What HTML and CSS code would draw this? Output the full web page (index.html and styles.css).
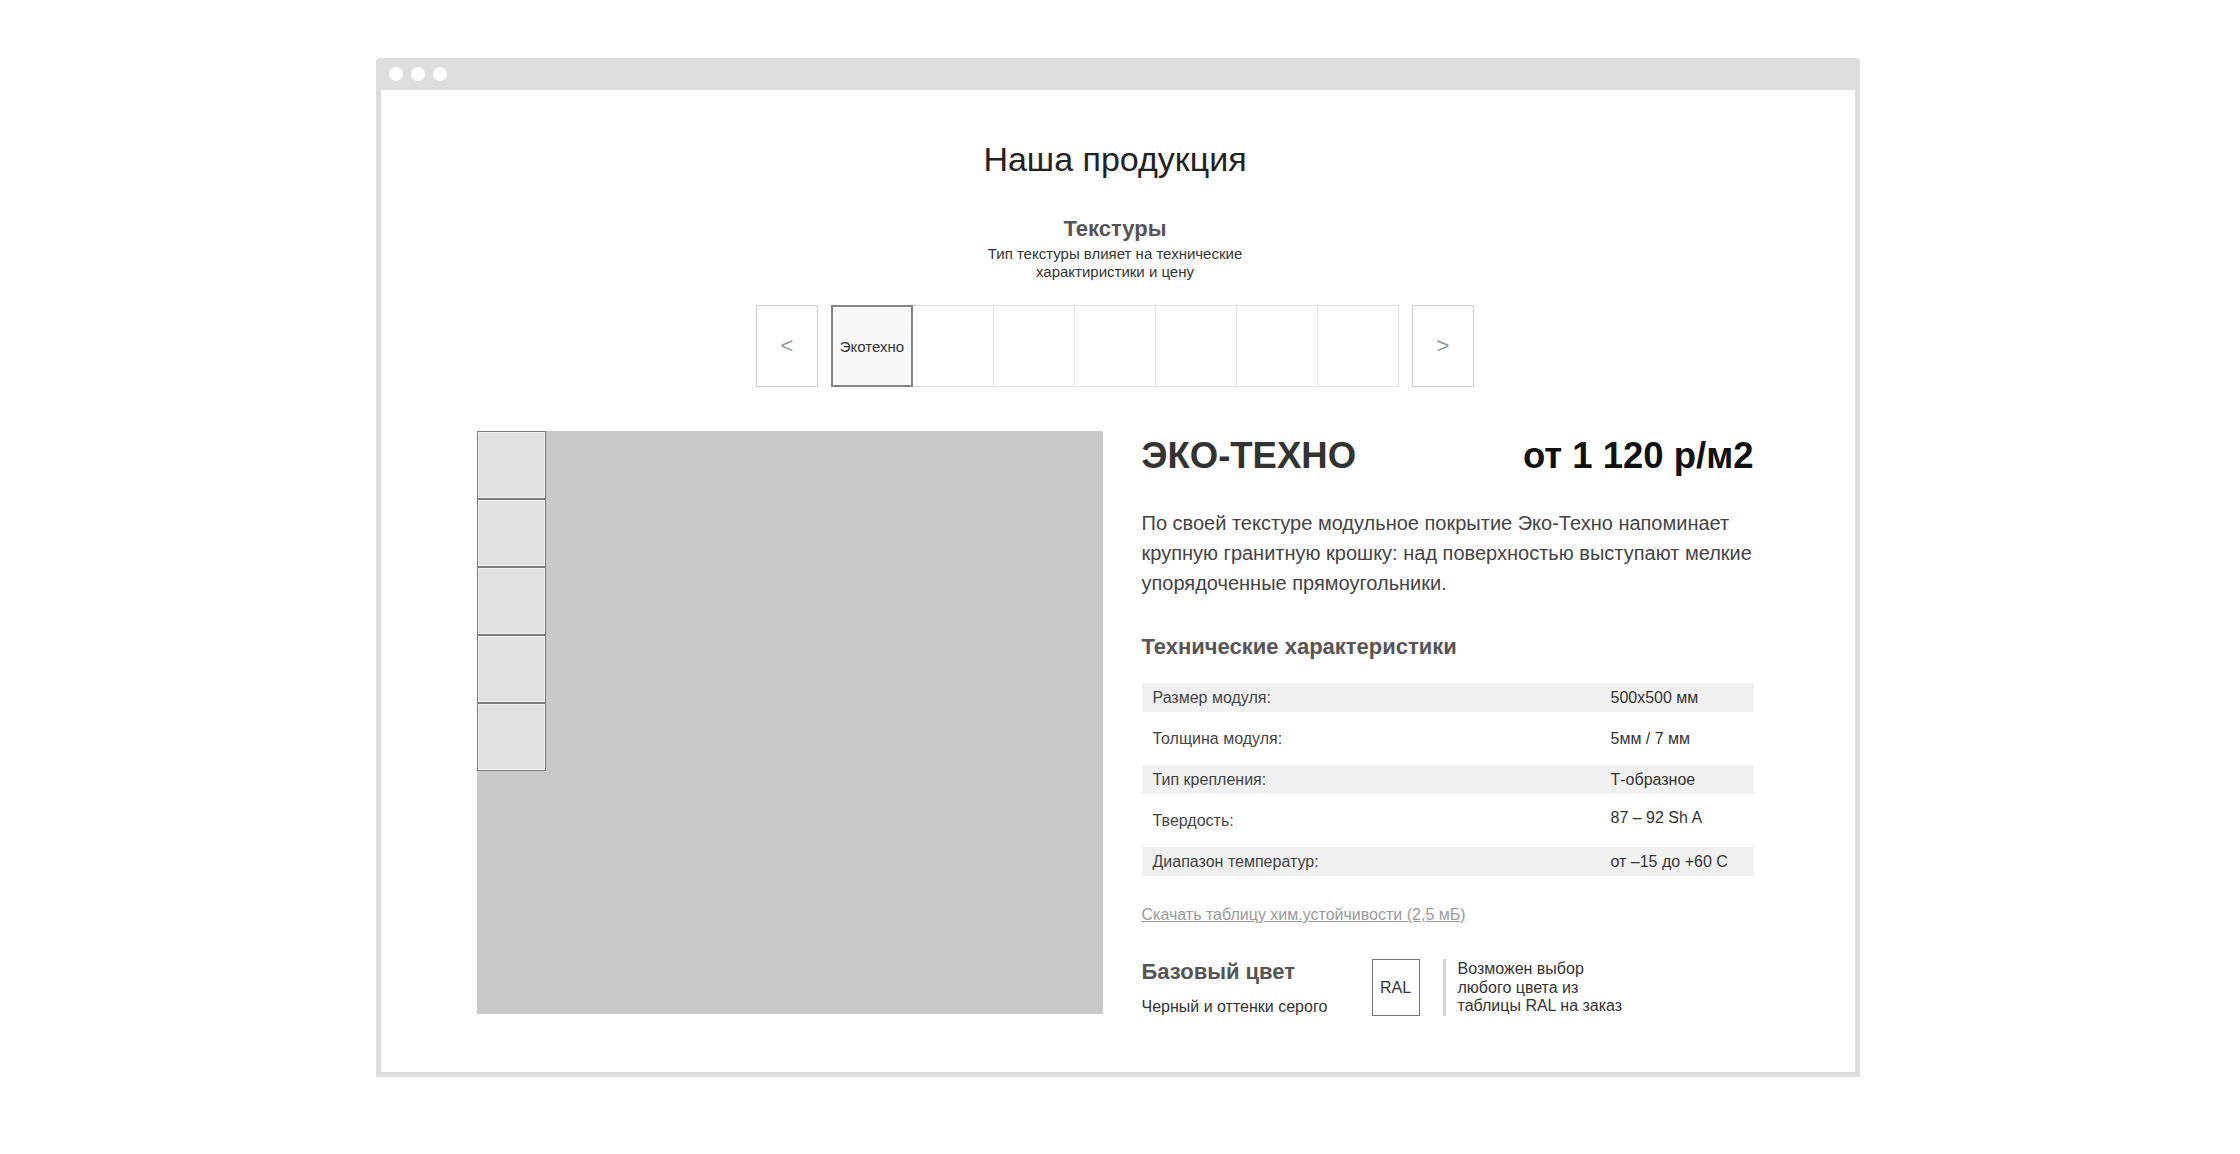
FILE: index.html
```html
<!DOCTYPE html>
<html lang="ru">
<head>
<meta charset="utf-8">
<title>Наша продукция</title>
<link rel="stylesheet" href="styles.css">
</head>
<body>
<div class="window">
  <div class="window-bar">
    <span class="dot"></span>
    <span class="dot"></span>
    <span class="dot"></span>
  </div>
  <div class="window-body">
    <h1 class="page-title">Наша продукция</h1>

    <section class="textures">
      <h2 class="textures-title">Текстуры</h2>
      <p class="textures-note">Тип текстуры влияет на технические<br>характиристики и цену</p>
      <div class="carousel">
        <button class="carousel-arrow" type="button">&lt;</button>
        <div class="carousel-track">
          <div class="texture-tile is-active">Экотехно</div>
          <div class="texture-tile"></div>
          <div class="texture-tile"></div>
          <div class="texture-tile"></div>
          <div class="texture-tile"></div>
          <div class="texture-tile"></div>
          <div class="texture-tile"></div>
        </div>
        <button class="carousel-arrow" type="button">&gt;</button>
      </div>
    </section>

    <section class="product">
      <div class="gallery">
        <div class="thumbs">
          <div class="thumb"></div>
          <div class="thumb"></div>
          <div class="thumb"></div>
          <div class="thumb"></div>
          <div class="thumb"></div>
        </div>
      </div>

      <div class="product-info">
        <div class="info-head">
          <h2 class="product-name">ЭКО-ТЕХНО</h2>
          <div class="price">от 1 120 р/м2</div>
        </div>
        <p class="description">По своей текстуре модульное покрытие Эко-Техно напоминает крупную гранитную крошку: над поверхностью выступают мелкие упорядоченные прямоугольники.</p>

        <h3 class="section-title">Технические характеристики</h3>
        <div class="specs">
          <div class="spec-row is-shaded"><span class="spec-label">Размер модуля:</span><span class="spec-value">500x500 мм</span></div>
          <div class="spec-row is-plain"><span class="spec-label">Толщина модуля:</span><span class="spec-value">5мм / 7 мм</span></div>
          <div class="spec-row is-shaded"><span class="spec-label">Тип крепления:</span><span class="spec-value">Т-образное</span></div>
          <div class="spec-row is-plain"><span class="spec-label">Твердость:</span><span class="spec-value is-raised">87 – 92 Sh A</span></div>
          <div class="spec-row is-shaded"><span class="spec-label">Диапазон температур:</span><span class="spec-value">от –15 до +60 С</span></div>
        </div>

        <a class="download-link" href="#">Скачать таблицу хим.устойчивости (2,5 мБ)</a>

        <div class="base-color">
          <div class="base-text">
            <h3 class="section-title">Базовый цвет</h3>
            <p class="base-sub">Черный и оттенки серого</p>
          </div>
          <div class="ral-box">RAL</div>
          <div class="ral-bar"></div>
          <p class="ral-note">Возможен выбор<br>любого цвета из<br>таблицы RAL на заказ</p>
        </div>
      </div>
    </section>
  </div>
</div>
</body>
</html>
```

FILE: styles.css
```css
* {
  box-sizing: border-box;
}

body {
  margin: 0;
  background: #ffffff;
  font-family: "Liberation Sans", Arial, sans-serif;
  color: #333333;
}

h1, h2, h3, p {
  margin: 0;
}

/* browser window frame */
.window {
  width: 1484px;
  margin: 58px 0 0 376px;
}

.window-bar {
  height: 32px;
  background: #dedede;
  border-radius: 4px 4px 0 0;
  display: flex;
  align-items: center;
  gap: 8px;
  padding-left: 13px;
}

.dot {
  width: 14px;
  height: 14px;
  border-radius: 50%;
  background: #ffffff;
}

.window-body {
  height: 987px;
  border: 5px solid #dedede;
  border-top: 0;
  padding: 49px 6px 0 0;
}

.page-title {
  font-size: 34px;
  line-height: 40px;
  font-weight: normal;
  text-align: center;
  color: #222222;
}

/* texture picker */
.textures {
  text-align: center;
}

.textures-title {
  margin-top: 38px;
  font-size: 22px;
  line-height: 24px;
  font-weight: bold;
  color: #555555;
}

.textures-note {
  margin-top: 4px;
  font-size: 15px;
  line-height: 18px;
  color: #333333;
}

.carousel {
  margin-top: 24px;
  display: flex;
  justify-content: center;
  gap: 13px;
  height: 82px;
}

.carousel-arrow {
  width: 62px;
  height: 82px;
  padding: 0;
  border: 1px solid #cfcfcf;
  background: #ffffff;
  color: #999999;
  font-family: "Liberation Sans", Arial, sans-serif;
  font-size: 22px;
}

.carousel-track {
  display: flex;
}

.texture-tile {
  width: 82px;
  height: 82px;
  border: 1px solid #e2e2e2;
  background: #ffffff;
  display: flex;
  align-items: center;
  justify-content: center;
  font-size: 15px;
  color: #333333;
}

.texture-tile + .texture-tile {
  margin-left: -1px;
}

.texture-tile.is-active {
  position: relative;
  z-index: 1;
  border: 2px solid #858585;
  background: #f7f7f7;
}

/* product card */
.product {
  width: 1277px;
  margin: 44px auto 0;
  display: flex;
  gap: 39px;
}

.gallery {
  flex: 0 0 626px;
  height: 583px;
  background: #c8c8c8;
}

.thumbs {
  width: 69px;
  display: flex;
  flex-direction: column;
}

.thumb {
  height: 68px;
  border: 1px solid #7b7b7b;
  background: #e0e0e0;
  box-shadow: inset 0 0 0 1px #f3f3f3;
}

.product-info {
  flex: 1;
  padding-top: 5px;
}

.info-head {
  display: flex;
  justify-content: space-between;
  align-items: baseline;
}

.product-name {
  font-size: 36.5px;
  line-height: 40px;
  font-weight: bold;
  color: #333333;
}

.price {
  font-size: 36.5px;
  line-height: 40px;
  font-weight: bold;
  color: #111111;
}

.description {
  margin-top: 32px;
  font-size: 20px;
  line-height: 30px;
  color: #444444;
}

.section-title {
  font-size: 22px;
  line-height: 26px;
  font-weight: bold;
  color: #555555;
}

.description + .section-title {
  margin-top: 36px;
}

.specs {
  margin-top: 23px;
}

.spec-row {
  display: grid;
  grid-template-columns: 458px 1fr;
  align-items: center;
  padding-left: 11px;
  font-size: 16px;
  line-height: 20px;
}

.spec-row.is-shaded {
  height: 29px;
  background: #f1f1f1;
}

.spec-row.is-plain {
  height: 53px;
}

.spec-label {
  color: #444444;
}

.spec-value {
  color: #333333;
}

.spec-value.is-raised {
  margin-bottom: 6px;
}

.download-link {
  display: block;
  margin-top: 29px;
  font-size: 16px;
  line-height: 20px;
  color: #9a9a9a;
  text-decoration: underline;
}

/* base colour block */
.base-color {
  margin-top: 34px;
  display: flex;
  align-items: flex-start;
}

.base-text {
  width: 230px;
}

.base-sub {
  margin-top: 12px;
  font-size: 16px;
  line-height: 20px;
  color: #333333;
}

.ral-box {
  width: 48px;
  height: 57px;
  border: 1px solid #777777;
  display: flex;
  align-items: center;
  justify-content: center;
  font-size: 16px;
  color: #333333;
}

.ral-bar {
  width: 3px;
  height: 57px;
  margin-left: 23px;
  background: #d4d4d4;
}

.ral-note {
  margin: 1px 0 0 12px;
  font-size: 16px;
  line-height: 18.5px;
  color: #333333;
}
```
